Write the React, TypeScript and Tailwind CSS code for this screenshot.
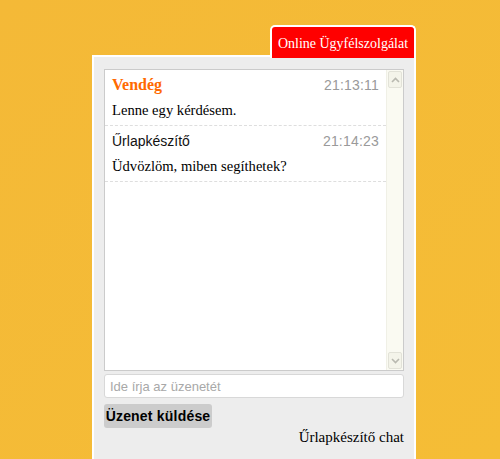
import React from "react";

const serif = "font-['Liberation_Serif',serif]";
const sans = "font-['Liberation_Sans',Arial,sans-serif]";

type Msg = { name: string; time: string; text: string; guest?: boolean };

const messages: Msg[] = [
  { name: "Vendég", time: "21:13:11", text: "Lenne egy kérdésem.", guest: true },
  { name: "Űrlapkészítő", time: "21:14:23", text: "Üdvözlöm, miben segíthetek?" },
];

function Chevron({ up }: { up?: boolean }) {
  return (
    <svg width="9" height="6" viewBox="0 0 9 6" className={up ? "" : "rotate-180"}>
      <path d="M1 5 L4.5 1.5 L8 5" fill="none" stroke="#b9b9b0" strokeWidth="1.6" />
    </svg>
  );
}

function ScrollBar() {
  return (
    <div className="w-[17px] bg-[#fafaf2] border-l border-[#f0f0e6] flex flex-col justify-between">
      <div className="h-[17px] m-[1px] border border-[#e2e2d8] bg-[#f4f4ea] rounded-[2px] flex items-center justify-center">
        <Chevron up />
      </div>
      <div className="h-[17px] m-[1px] border border-[#e2e2d8] bg-[#f4f4ea] rounded-[2px] flex items-center justify-center">
        <Chevron />
      </div>
    </div>
  );
}

function Message({ m }: { m: Msg }) {
  return (
    <div className="px-[7px] pt-[5px] pb-[5px] border-b border-dashed border-[#dedede]">
      <div className="flex items-center justify-between h-[20px]">
        {m.guest ? (
          <span className={`${serif} text-[16px] font-bold text-[#ff6a00]`}>{m.name}</span>
        ) : (
          <span className={`${sans} text-[14px] text-[#111]`}>{m.name}</span>
        )}
        <span className={`${sans} text-[14px] text-[#9a9a9a] tracking-[0.2px]`}>{m.time}</span>
      </div>
      <div className={`${serif} text-[14.6px] leading-[20px] mt-[5px] text-black`}>{m.text}</div>
    </div>
  );
}

export default function App() {
  return (
    <div className="w-[500px] h-[459px] overflow-hidden bg-gradient-to-br from-[#f4b937] to-[#f5bd36]">
      <div className="ml-[92px] pt-[25px] w-[324px] flex flex-col">
        <div
          className={`${serif} self-end relative z-10 -mb-[3px] h-[33px] w-[146px] bg-[#ff0000] border-2 border-b-0 border-white rounded-t-[5px] text-white text-[14px] flex items-center justify-center pt-[1px]`}
        >
          Online Ügyfélszolgálat
        </div>
        <div className="h-[420px] bg-[#ededed] border-2 border-b-0 border-white px-[10px] pt-[12px]">
          <div className="h-[302px] bg-white border border-[#cbcbcb] flex">
            <div className="flex-1">
              {messages.map((m) => (
                <Message key={m.time} m={m} />
              ))}
            </div>
            <ScrollBar />
          </div>
          <input
            className={`${sans} mt-[3px] h-[24px] w-full bg-white border border-[#d8d8d8] rounded-[3px] px-[5px] text-[13px] placeholder:text-[#a8a8a8] outline-none`}
            placeholder="Ide írja az üzenetét"
          />
          <button
            className={`${sans} mt-[6px] h-[24px] w-[108px] bg-[#cccccc] rounded-[3px] text-[14px] font-bold tracking-[0.2px] text-black flex items-center justify-center`}
          >
            Üzenet küldése
          </button>
          <div className={`${serif} text-right text-[15px] leading-[16px] mt-[1px] text-black`}>
            Űrlapkészítő chat
          </div>
        </div>
      </div>
    </div>
  );
}
